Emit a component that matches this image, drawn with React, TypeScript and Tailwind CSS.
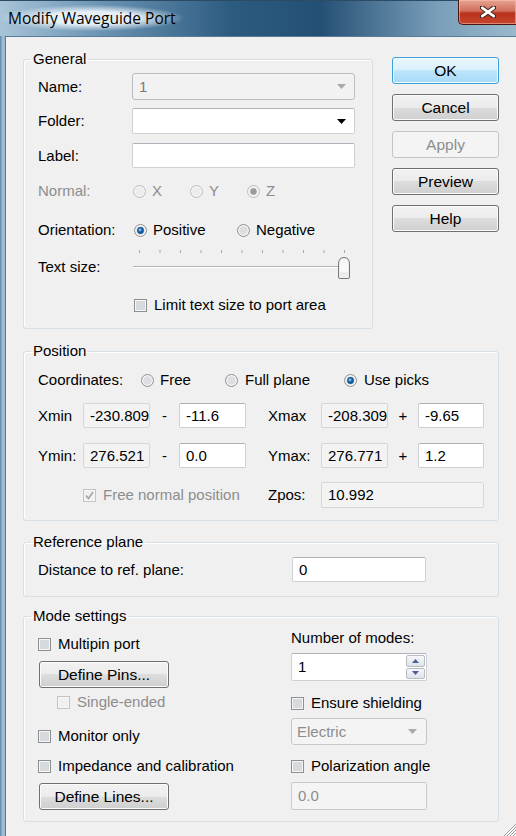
import React from "react";

type Kids = { children?: React.ReactNode };

function Radio({ checked = false, disabled = false }: { checked?: boolean; disabled?: boolean }) {
  return (
    <svg width="13" height="13" viewBox="0 0 13 13" className="shrink-0">
      <circle cx="6.5" cy="6.5" r="6" fill="#f4f4f4" stroke={disabled ? "#bcbcbc" : "#8e8f8f"} />
      <circle cx="6.5" cy="6.5" r="4.2" fill={disabled ? "#ececec" : "#dcdee1"} />
      {checked && !disabled && (
        <>
          <circle cx="6.5" cy="6.5" r="3.4" fill="#14579b" />
          <circle cx="6" cy="5.8" r="1.6" fill="#6fb6ee" />
        </>
      )}
      {checked && disabled && <circle cx="6.5" cy="6.5" r="3.2" fill="#9a9a9a" />}
    </svg>
  );
}

function Box({ checked = false, disabled = false }: { checked?: boolean; disabled?: boolean }) {
  return (
    <svg width="13" height="13" viewBox="0 0 13 13" className="shrink-0">
      <rect x="0.5" y="0.5" width="12" height="12" fill="#f6f6f6" stroke={disabled ? "#c4c4c4" : "#8e8f8f"} />
      <rect x="2" y="2" width="9" height="9" fill={disabled ? "#f0f0f0" : "#d6d9dd"} />
      {checked && (
        <path d="M3 6.5 L5.5 9.5 L10 3" fill="none" stroke={disabled ? "#a0a0a0" : "#333"} strokeWidth="1.4" />
      )}
    </svg>
  );
}

function Arrow({ color = "#000" }: { color?: string }) {
  return (
    <svg width="9" height="5" viewBox="0 0 9 5" className="shrink-0">
      <path d="M0 0 H9 L4.5 5 Z" fill={color} />
    </svg>
  );
}

function TextBox({ value = "", w, h = 25, gray = false }: { value?: string; w: number; h?: number; gray?: boolean }) {
  return (
    <div
      style={{ width: w, height: h }}
      className={
        "flex items-center overflow-hidden whitespace-nowrap rounded-[2px] border pl-[6px] " +
        (gray
          ? "border-[#d6d6d6] bg-[#f3f3f3] text-black"
          : "border-[#cdd0d4] border-t-[#aeb2b8] bg-white text-black")
      }
    >
      {value}
    </div>
  );
}

function Btn({ children, kind = "normal", w = 107 }: Kids & { kind?: "normal" | "default" | "disabled"; w?: number }) {
  const look =
    kind === "default"
      ? "border-[#3c9fd8] bg-[linear-gradient(#eaf6fd_0%,#d9f0fc_50%,#bee6fd_50%,#a7d9f5_100%)] text-black shadow-[inset_0_0_0_1px_#f4fbff]"
      : kind === "disabled"
      ? "border-[#c2c5c8] bg-[#f4f4f4] text-[#8d8d8d]"
      : "border-[#707070] bg-[linear-gradient(#f2f2f2_0%,#ebebeb_50%,#dddddd_50%,#cfcfcf_100%)] text-black shadow-[inset_0_0_0_1px_#fbfbfb]";
  return (
    <div style={{ width: w }} className={"flex h-[27px] items-center justify-center rounded-[3px] border text-[15.5px] " + look}>
      {children}
    </div>
  );
}

// group box: legend sits on the border, body padding lives on an inner div
function Group({ title, className = "", pad = "pl-[14px]", children }: Kids & { title: string; className?: string; pad?: string }) {
  return (
    <fieldset className={"rounded-[3px] border border-[#d5dfe5] shadow-[inset_1px_1px_0_#fff] " + className}>
      <legend className="ml-[7px] px-[2px] leading-[18px]">{title}</legend>
      <div className={pad}>{children}</div>
    </fieldset>
  );
}

function CheckRow({ label, checked = false, disabled = false, className = "" }: { label: string; checked?: boolean; disabled?: boolean; className?: string }) {
  return (
    <div className={"flex h-[16px] items-center gap-[7px] " + className}>
      <Box checked={checked} disabled={disabled} />
      <span className={disabled ? "text-[#8d8d8d]" : ""}>{label}</span>
    </div>
  );
}

function RadioItem({ label, w, checked = false, disabled = false, gap = 6 }: { label: string; w: number; checked?: boolean; disabled?: boolean; gap?: number }) {
  return (
    <div style={{ width: w, gap }} className="flex items-center">
      <Radio checked={checked} disabled={disabled} />
      <span className={disabled ? "text-[#8d8d8d]" : ""}>{label}</span>
    </div>
  );
}

function Slider() {
  const ticks = Array.from({ length: 11 }, (_, i) => 7 + i * 20.5);
  return (
    <svg width="222" height="32" viewBox="0 0 222 32">
      {ticks.map((x) => (
        <line key={x} x1={x + 0.5} y1="2" x2={x + 0.5} y2="5" stroke="#a8a8a8" />
      ))}
      <line x1="1" y1="18.5" x2="218" y2="18.5" stroke="#b4b4b4" />
      <line x1="1" y1="19.5" x2="218" y2="19.5" stroke="#ffffff" />
      <path
        d="M206.5 16 Q206.5 9.5 212 9.5 Q217.5 9.5 217.5 16 L217.5 29 Q217.5 30.5 216 30.5 L208 30.5 Q206.5 30.5 206.5 29 Z"
        fill="#ececec"
        stroke="#7a7a7a"
      />
      <path d="M208 16 Q208 11 212 11 Q216 11 216 16 L216 24 L208 24 Z" fill="#f8f8f8" />
    </svg>
  );
}

function TitleBar() {
  return (
    <div className="flex h-[36px] items-start justify-between border-t border-[#2b4c66]">
      <div className="ml-[1px] mt-[4px] rounded-[14px] bg-[radial-gradient(ellipse_at_center,rgba(235,244,250,0.95)_35%,rgba(200,222,238,0)_72%)] px-[7px] py-[3px] font-['Open_Sans',sans-serif] text-[15.5px] leading-[20px] text-black">
        Modify Waveguide Port
      </div>
      <div className="mt-[-1px] flex h-[25px] w-[58px] items-center justify-center rounded-bl-[5px] border border-t-0 border-r-0 border-[#4b1610] bg-[linear-gradient(#e8a493_0%,#d0705c_45%,#b8321d_55%,#c8452c_100%)] shadow-[inset_0_0_0_1px_rgba(255,200,190,0.5)]">
        <svg width="16" height="12" viewBox="0 0 16 12">
          <path d="M2 1.5 L14 10.5 M14 1.5 L2 10.5" stroke="#3b1b16" strokeWidth="4.6" strokeLinecap="round" />
          <path d="M2.3 1.8 L13.7 10.2 M13.7 1.8 L2.3 10.2" stroke="#fff" strokeWidth="2.8" strokeLinecap="round" />
        </svg>
      </div>
    </div>
  );
}

function General() {
  return (
    <Group title="General" className="w-[350px] pb-[15px]">
      <div className="mt-[5px] flex h-[27px] items-center">
        <span className="w-[94px]">Name:</span>
        <div className="flex h-[27px] w-[223px] items-center justify-between rounded-[3px] border border-[#b9bdc1] bg-[#f2f2f2] pl-[6px] pr-[8px] text-[#7a7a7a]">
          <span>1</span>
          <Arrow color="#a9a9a9" />
        </div>
      </div>
      <div className="mt-[8px] flex h-[26px] items-center">
        <span className="w-[94px]">Folder:</span>
        <div className="flex h-[26px] w-[223px] items-center justify-end rounded-[2px] border border-[#cdd0d4] border-t-[#aeb2b8] bg-white pr-[8px]">
          <Arrow />
        </div>
      </div>
      <div className="mt-[9px] flex h-[25px] items-center">
        <span className="w-[94px]">Label:</span>
        <TextBox w={223} />
      </div>
      <div className="mt-[13px] flex h-[20px] items-center">
        <span className="w-[95px] text-[#8d8d8d]">Normal:</span>
        <RadioItem label="X" w={57} disabled />
        <RadioItem label="Y" w={57} disabled />
        <RadioItem label="Z" w={57} checked disabled />
      </div>
      <div className="mt-[19px] flex h-[20px] items-center">
        <span className="w-[96px]">Orientation:</span>
        <RadioItem label="Positive" w={103} checked />
        <RadioItem label="Negative" w={100} />
      </div>
      <div className="mt-[8px] flex h-[32px] items-center">
        <span className="w-[94px] pt-[6px]">Text size:</span>
        <Slider />
      </div>
      <CheckRow className="ml-[96px] mt-[17px]" label="Limit text size to port area" />
    </Group>
  );
}

function Position() {
  return (
    <Group title="Position" className="mt-[13px] w-[476px] pb-[12px]">
      <div className="mt-[10px] flex h-[20px] items-center">
        <span className="w-[103px]">Coordinates:</span>
        <RadioItem label="Free" w={84} />
        <RadioItem label="Full plane" w={119} gap={7} />
        <RadioItem label="Use picks" w={120} checked gap={7} />
      </div>
      <div className="mt-[13px] flex h-[25px] items-center">
        <span className="w-[45px]">Xmin</span>
        <TextBox w={67} value="-230.809" gray />
        <span className="w-[29px] text-center">-</span>
        <TextBox w={67} value="-11.6" />
        <span className="ml-[22px] w-[53px]">Xmax</span>
        <TextBox w={67} value="-208.309" gray />
        <span className="w-[30px] text-center">+</span>
        <TextBox w={66} value="-9.65" />
      </div>
      <div className="mt-[15px] flex h-[25px] items-center">
        <span className="w-[45px]">Ymin:</span>
        <TextBox w={67} value="276.521" gray />
        <span className="w-[29px] text-center">-</span>
        <TextBox w={67} value="0.0" />
        <span className="ml-[22px] w-[53px]">Ymax:</span>
        <TextBox w={67} value="276.771" gray />
        <span className="w-[30px] text-center">+</span>
        <TextBox w={66} value="1.2" />
      </div>
      <div className="mt-[14px] flex h-[26px] items-center">
        <div className="w-[230px] pl-[45px]">
          <CheckRow label="Free normal position" checked disabled />
        </div>
        <span className="w-[53px]">Zpos:</span>
        <TextBox w={163} h={26} value="10.992" gray />
      </div>
    </Group>
  );
}

function ReferencePlane() {
  return (
    <Group title="Reference plane" className="mt-[12px] w-[476px] pb-[14px]">
      <div className="mt-[6px] flex h-[25px] items-center">
        <span className="w-[254px]">Distance to ref. plane:</span>
        <TextBox w={134} value="0" />
      </div>
    </Group>
  );
}

function Spinner() {
  return (
    <div className="flex h-[28px] w-[136px] items-stretch rounded-[2px] border border-[#cdd0d4] border-t-[#aeb2b8] bg-white">
      <span className="flex flex-1 items-center pl-[6px]">1</span>
      <div className="flex w-[21px] flex-col gap-[1px] p-[1px]">
        {[0, 1].map((i) => (
          <div
            key={i}
            className="flex flex-1 items-center justify-center rounded-[2px] border border-[#b6bcc4] bg-[linear-gradient(#f6f7f9,#dfe3e8)]"
          >
            <svg width="7" height="4" viewBox="0 0 7 4">
              <path d={i === 0 ? "M0 4 H7 L3.5 0 Z" : "M0 0 H7 L3.5 4 Z"} fill="#4a5f9c" />
            </svg>
          </div>
        ))}
      </div>
    </div>
  );
}

function ModeSettings() {
  return (
    <Group title="Mode settings" className="mt-[10px] w-[476px] pb-[11px]" pad="flex">
      <div className="w-[267px] pl-[14px]">
        <CheckRow className="mt-[11px]" label="Multipin port" />
        <div className="ml-[1px] mt-[9px]">
          <Btn w={130}>Define Pins...</Btn>
        </div>
        <CheckRow className="ml-[19px] mt-[6px]" label="Single-ended" disabled />
        <CheckRow className="mt-[18px]" label="Monitor only" />
        <CheckRow className="mt-[14px]" label="Impedance and calibration" />
        <div className="ml-[1px] mt-[9px]">
          <Btn w={130}>Define Lines...</Btn>
        </div>
      </div>
      <div className="flex-1">
        <div className="mt-[5px] flex h-[16px] items-center">Number of modes:</div>
        <div className="mt-[7px]">
          <Spinner />
        </div>
        <CheckRow className="mt-[14px]" label="Ensure shielding" />
        <div className="mt-[7px] flex h-[27px] w-[136px] items-center justify-between rounded-[3px] border border-[#c4c8cc] bg-[#f4f4f4] pl-[5px] pr-[9px] text-[#8d8d8d]">
          <span>Electric</span>
          <Arrow color="#a9a9a9" />
        </div>
        <CheckRow className="mt-[13px]" label="Polarization angle" />
        <div className="mt-[8px] flex h-[28px] w-[136px] items-center rounded-[2px] border border-[#c9cccf] bg-[#f4f4f4] pl-[6px] text-[#8d8d8d]">
          0.0
        </div>
      </div>
    </Group>
  );
}

export default function App() {
  return (
    <div className="relative h-[836px] w-[516px] overflow-hidden bg-[linear-gradient(90deg,#a8c4d8_0%,#6f97b6_18%,#2c5b80_45%,#244f74_62%,#7a9fba_85%,#9ab8cc_100%)] font-['Liberation_Sans',Arial,sans-serif] text-[15px] leading-[18px] text-black">
      <TitleBar />
      <div className="flex h-[800px]">
        <div className="w-[5px] bg-[linear-gradient(90deg,#5f86a6,#a7c5dc_60%,#8fb1cb)]" />
        <div className="relative flex-1 border-l border-t border-[#5b7b95] bg-[#f0f0f0] pl-[17px] pt-[13px]">
          <div className="flex items-start">
            <General />
            <div className="ml-[19px] mt-[7px] flex flex-col gap-[10px]">
              <Btn kind="default">OK</Btn>
              <Btn>Cancel</Btn>
              <Btn kind="disabled">Apply</Btn>
              <Btn>Preview</Btn>
              <Btn>Help</Btn>
            </div>
          </div>
          <Position />
          <ReferencePlane />
          <ModeSettings />
          <svg width="12" height="12" viewBox="0 0 12 12" className="absolute bottom-0 right-0">
            {[3, 6, 9, 12].map((d) => (
              <g key={d}>
                <line x1={12 - d} y1="12" x2="12" y2={12 - d} stroke="#a0a0a0" />
                <line x1={13 - d} y1="12" x2="12" y2={13 - d} stroke="#ffffff" />
              </g>
            ))}
          </svg>
        </div>
      </div>
    </div>
  );
}
